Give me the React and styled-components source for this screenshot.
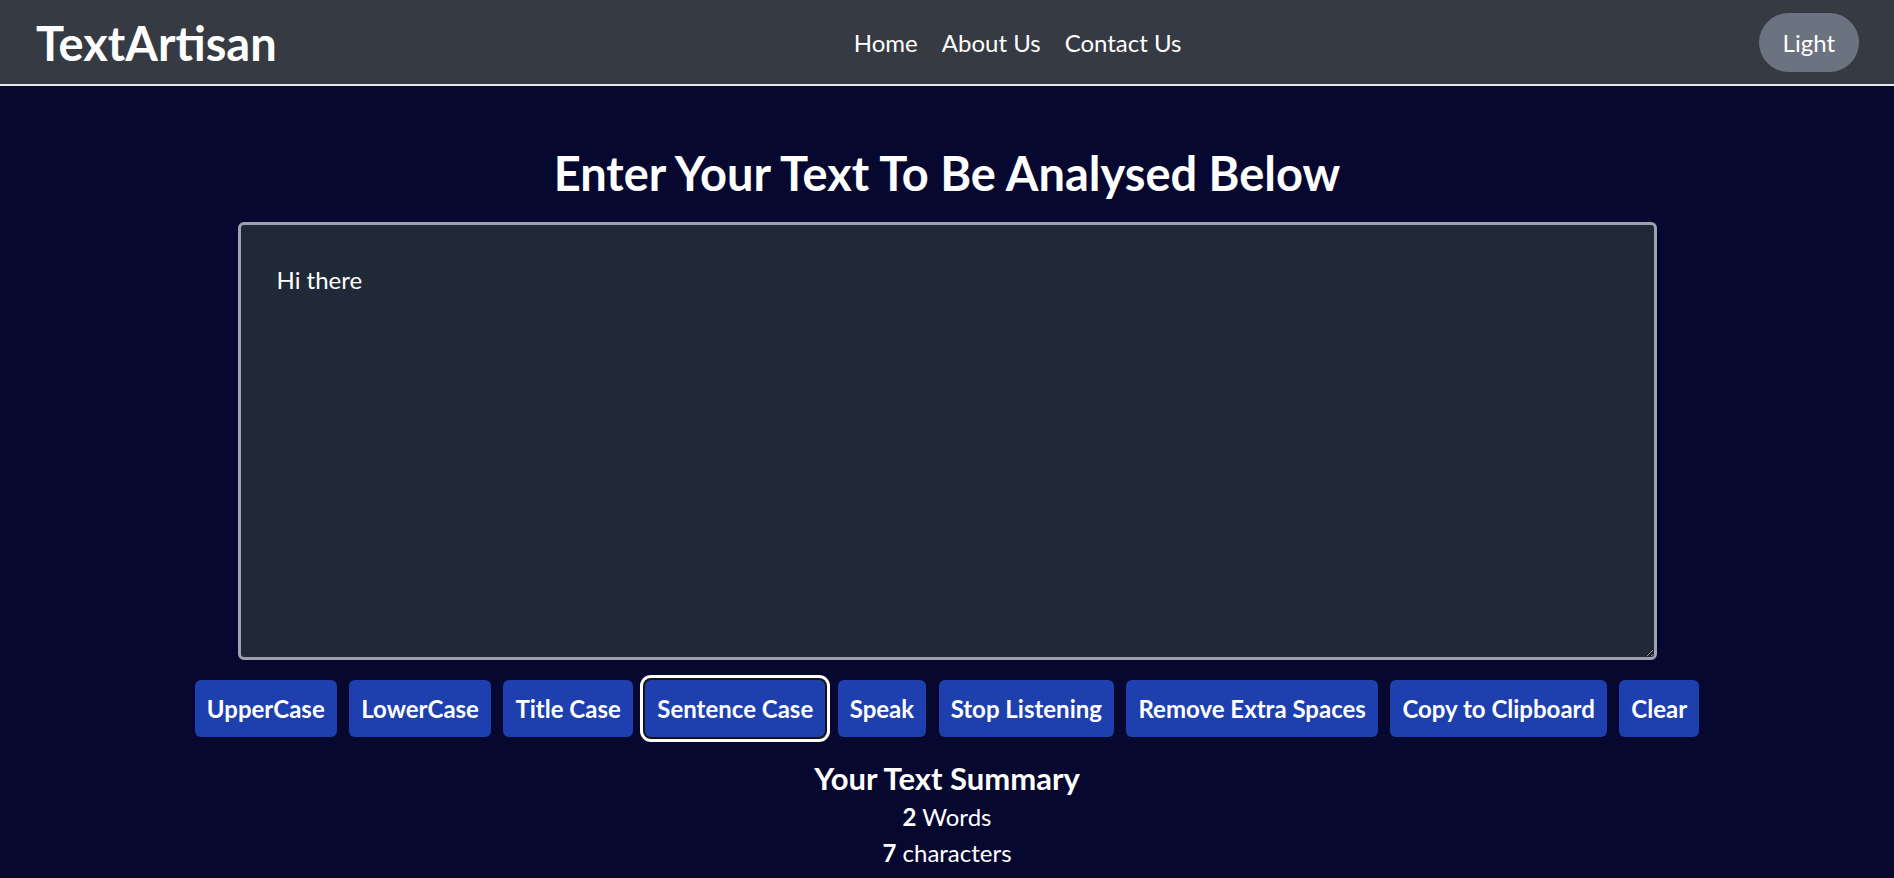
import React, { useState } from "react";
import styled, { createGlobalStyle } from "styled-components";

const Global = createGlobalStyle`
  html, body { margin: 0; padding: 0; }
  body {
    background: #070830;
    color: #ffffff;
    font-family: Lato, "Noto Sans", sans-serif;
  }
  * { box-sizing: border-box; }
`;

const Nav = styled.nav`
  height: 86px;
  background: #363a42;
  border-bottom: 2px solid #e5e7eb;
  display: flex;
  align-items: center;
  justify-content: space-between;
  padding: 0 35px 0 36px;
`;

const Logo = styled.a`
  font-size: 47px;
  font-weight: 700;
  color: #fff;
  text-decoration: none;
  line-height: 1;
  margin-top: 2px;
`;

const Links = styled.ul`
  display: flex;
  gap: 24px;
  list-style: none;
  margin: 2px 0 0;
  padding: 0;
`;

const LinkItem = styled.li`
  font-size: 24px;
  color: #fff;
  line-height: 1;
`;

const ModeButton = styled.button`
  height: 59px;
  padding: 0 24px;
  border: none;
  border-radius: 30px;
  background: #6b7280;
  color: #fff;
  font-family: inherit;
  font-size: 24px;
  cursor: pointer;
`;

const Main = styled.main`
  width: 1419px;
  margin: 0 auto;
  padding-top: 62px;
  display: flex;
  flex-direction: column;
  align-items: center;
`;

const Heading = styled.h1`
  margin: 0 0 23px;
  font-size: 47px;
  line-height: 51px;
  font-weight: 700;
  text-align: center;
`;

const TextArea = styled.textarea`
  width: 100%;
  height: 438px;
  border: 3px solid #9ca3af;
  border-radius: 6px;
  background: #1f2937;
  color: #fff;
  font-family: inherit;
  font-size: 24px;
  line-height: 35px;
  padding: 37px 36px;
  resize: vertical;
  outline: none;
`;

const ButtonRow = styled.div`
  margin-top: 20px;
  display: flex;
  flex-wrap: wrap;
  justify-content: center;
  gap: 12.5px;
  width: 1894px;
`;

const ActionButton = styled.button`
  height: 57px;
  padding: 0 12px;
  border: none;
  border-radius: 6px;
  background: #1e40af;
  color: #fff;
  font-family: inherit;
  font-size: 24px;
  font-weight: 700;
  cursor: pointer;
  box-shadow: ${(p) =>
    p.$focused ? "0 0 0 2px #151515, 0 0 0 5px #ffffff" : "none"};
`;

const Summary = styled.section`
  margin-top: 20px;
  text-align: center;
`;

const SummaryTitle = styled.h2`
  margin: 0;
  font-size: 31px;
  line-height: 42px;
  font-weight: 700;
`;

const SummaryLine = styled.p`
  margin: 0;
  font-size: 24px;
  line-height: 36px;
`;

const buttons = [
  "UpperCase",
  "LowerCase",
  "Title Case",
  "Sentence Case",
  "Speak",
  "Stop Listening",
  "Remove Extra Spaces",
  "Copy to Clipboard",
  "Clear",
];

export default function App() {
  const [text, setText] = useState("Hi there");
  const words = text.split(/\s+/).filter(Boolean).length;
  const chars = text.replace(/\s/g, "").length;
  return (
    <>
      <Global />
      <Nav>
        <Logo href="#">TextArtisan</Logo>
        <Links>
          <LinkItem>Home</LinkItem>
          <LinkItem>About Us</LinkItem>
          <LinkItem>Contact Us</LinkItem>
        </Links>
        <ModeButton>Light</ModeButton>
      </Nav>
      <Main>
        <Heading>Enter Your Text To Be Analysed Below</Heading>
        <TextArea value={text} onChange={(e) => setText(e.target.value)} />
        <ButtonRow>
          {buttons.map((b) => (
            <ActionButton key={b} $focused={b === "Sentence Case"}>
              {b}
            </ActionButton>
          ))}
        </ButtonRow>
        <Summary>
          <SummaryTitle>Your Text Summary</SummaryTitle>
          <SummaryLine>
            <b>{words}</b> Words
          </SummaryLine>
          <SummaryLine>
            <b>{chars}</b> characters
          </SummaryLine>
        </Summary>
      </Main>
    </>
  );
}
